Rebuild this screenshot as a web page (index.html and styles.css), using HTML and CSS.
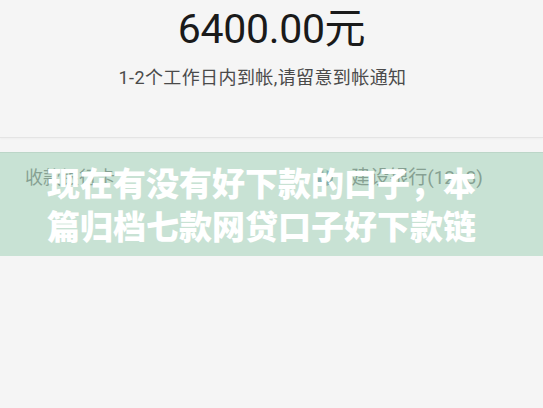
FILE: index.html
```html
<!DOCTYPE html>
<html lang="zh">
<head>
<meta charset="utf-8">
<link rel="stylesheet" href="styles.css">
</head>
<body>
<div class="page">
  <section class="head">
    <div class="amount">6400.00元</div>
    <div class="note">1-2个工作日内到帐,请留意到帐通知</div>
  </section>
  <section class="card">
    <div class="row">
      <span class="label">收款银行卡</span>
      <span class="bank">
        <svg class="logo" width="18" height="18" viewBox="0 0 18 18">
          <circle cx="9" cy="9" r="8" fill="#6f8ea6"/>
          <circle cx="9" cy="9" r="4.2" fill="#cfe2d8"/>
          <rect x="7.4" y="0" width="3.2" height="6" fill="#cfe2d8"/>
        </svg>
        <span class="bank-name">建设银行(1213)</span>
      </span>
    </div>
    <div class="overlay">
      <p class="title">现在有没有好下款的口子，本<br>篇归档七款网贷口子好下款链</p>
    </div>
  </section>
</div>
</body>
</html>
```
FILE: styles.css
```css
html, body {
  margin: 0;
  padding: 0;
  background: #f5f5f5;
}
.page {
  width: 543px;
  height: 408px;
  overflow: hidden;
  font-family: Roboto, "Noto Sans CJK SC", sans-serif;
}
.head {
  height: 137px;
  border-bottom: 1px solid #e4e4e4;
  box-shadow: 0 1px 2px rgba(0,0,0,0.03);
  display: flex;
  flex-direction: column;
  align-items: center;
}
.amount {
  margin-top: 4px;
  font-size: 41px;
  line-height: 50px;
  color: #1a1a1a;
  letter-spacing: -0.3px;
}
.note {
  margin-top: 13px;
  padding-right: 18px;
  font-size: 18px;
  line-height: 22px;
  letter-spacing: 0.4px;
  color: #4a4a4a;
}
.card {
  position: relative;
  margin-top: 14px;
  height: 104px;
  border-top: 1px solid #dcdcdc;
}
.row {
  display: flex;
  align-items: center;
  justify-content: space-between;
  padding: 13px 60px 0 25px;
  font-size: 18px;
  line-height: 24px;
  color: #707070;
}
.bank {
  display: flex;
  align-items: center;
  gap: 17px;
}
.bank-name {
  font-size: 19px;
}
.overlay {
  position: absolute;
  left: 0;
  right: 0;
  top: -1px;
  height: 104px;
  background: rgba(155, 208, 179, 0.5);
  display: flex;
  align-items: center;
  justify-content: center;
  padding-right: 20px;
  box-sizing: border-box;
}
.title {
  margin: 0;
  text-align: center;
  font-family: "Noto Sans CJK SC", sans-serif;
  font-weight: 900;
  font-size: 33px;
  line-height: 43px;
  color: #ffffff;
}
```
